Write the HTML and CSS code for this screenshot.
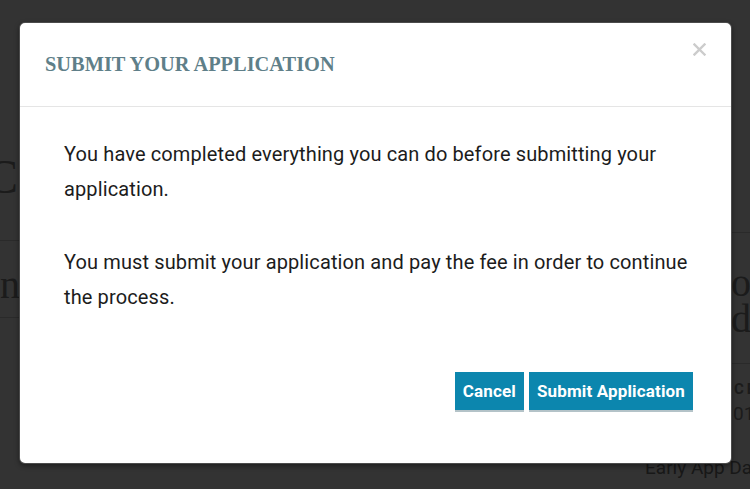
FILE: index.html
```html
<!DOCTYPE html>
<html lang="en">
<head>
<meta charset="utf-8">
<title>Submit Your Application</title>
<link rel="stylesheet" href="styles.css">
</head>
<body>
<div class="page">
  <div class="col-left">
    <h1 class="page-title">Complete Your Application</h1>
    <div class="plan-row"><span class="plan-name">n</span><span class="plan-tag">E</span></div>
  </div>
  <div class="col-right">
    <div class="deadline-big"><div>on</div><div>de</div></div>
    <div class="deadline-label">CE</div>
    <div class="deadline-date">01</div>
    <div class="deadline-note">Early App Date</div>
  </div>
</div>
<div class="backdrop"></div>
<div class="modal">
  <div class="modal-header">
    <h2 class="modal-title">SUBMIT YOUR APPLICATION</h2>
    <button class="close-btn" aria-label="Close">
      <svg width="13" height="13" viewBox="0 0 13 13"><path d="M1.5 1.5 L11.5 11.5 M11.5 1.5 L1.5 11.5" stroke="#cccccc" stroke-width="2.4" stroke-linecap="square"/></svg>
    </button>
  </div>
  <div class="modal-body">
    <p>You have completed everything you can do before submitting your application.</p>
    <p>You must submit your application and pay the fee in order to continue the process.</p>
  </div>
  <div class="modal-footer">
    <button class="btn">Cancel</button>
    <button class="btn">Submit Application</button>
  </div>
</div>
</body>
</html>
```
FILE: styles.css
```css
html, body {
  margin: 0;
  padding: 0;
}
body {
  width: 750px;
  height: 489px;
  overflow: hidden;
  background: #ffffff;
  position: relative;
  font-family: "Roboto", "Liberation Sans", sans-serif;
}
.page {
  display: flex;
  margin-left: -14px;
}
.col-left {
  width: 659px;
  flex: none;
}
.page-title {
  margin: 0;
  padding-top: 150px;
  padding-bottom: 36px;
  font-family: "Liberation Serif", serif;
  font-weight: normal;
  font-size: 48px;
  line-height: 54px;
  color: #888888;
  border-bottom: 1px solid #d2d2d2;
  white-space: nowrap;
}
.plan-row {
  padding: 24px 0 12px 14px;
  border-bottom: 1px solid #d2d2d2;
  white-space: nowrap;
  display: flex;
  align-items: flex-start;
}
.plan-name {
  font-family: "Liberation Serif", serif;
  font-size: 40px;
  line-height: 40px;
  color: #888888;
}
.plan-tag {
  font-size: 16px;
  margin-top: 6px;
  color: #2f7f94;
}
.col-right {
  flex: 1;
  padding-top: 232px;
  white-space: nowrap;
}
.deadline-big {
  border-top: 1px solid #d2d2d2;
  border-bottom: 1px solid #d2d2d2;
  padding: 32px 0 26px 86px;
  font-family: "Liberation Serif", serif;
  font-size: 40px;
  line-height: 36px;
  color: #888888;
}
.deadline-label {
  padding: 16px 0 0 89px;
  font-weight: bold;
  font-size: 15px;
  letter-spacing: 3px;
  color: #888888;
}
.deadline-date {
  padding: 4px 0 0 88px;
  font-size: 19px;
  color: #888888;
}
.deadline-note {
  padding-top: 31px;
  font-size: 19px;
  color: #777777;
}
.backdrop {
  position: absolute;
  inset: 0;
  background: rgba(0, 0, 0, 0.8);
}
.modal {
  position: absolute;
  left: 19px;
  top: 22px;
  width: 713px;
  height: 442px;
  box-sizing: border-box;
  background: #ffffff;
  border: 1px solid rgba(0, 0, 0, 0.7);
  border-radius: 6px;
  display: flex;
  flex-direction: column;
  box-shadow: 0 2px 5px rgba(0, 0, 0, 0.4);
}
.modal-header {
  display: flex;
  justify-content: space-between;
  align-items: flex-start;
  padding: 20px 25px 31px 25px;
  border-bottom: 1px solid #e5e5e5;
}
.modal-title {
  margin: 10px 0 0 0;
  font-family: "Liberation Serif", serif;
  font-weight: bold;
  font-size: 20.4px;
  line-height: 22px;
  color: #5f7f89;
}
.close-btn {
  border: none;
  background: none;
  padding: 0;
  margin: 0;
  width: 13px;
  height: 13px;
  display: block;
}
.close-btn svg {
  display: block;
}
.modal-body {
  padding: 30px 22px 0 44px;
  font-size: 20px;
  line-height: 35px;
  letter-spacing: 0.12px;
  color: #1c1c1c;
}
.modal-body p {
  margin: 0 0 38px 0;
}
.modal-body p:last-child {
  margin-bottom: 0;
}
.modal-footer {
  margin-top: auto;
  display: flex;
  justify-content: flex-end;
  gap: 5px;
  padding: 0 38px 51px 0;
}
.btn {
  height: 40px;
  box-sizing: border-box;
  padding: 0 8px;
  border: none;
  border-bottom: 2px solid #b4c3c8;
  background: #0c86ae;
  color: #ffffff;
  font-family: "Roboto", "Liberation Sans", sans-serif;
  font-weight: bold;
  font-size: 17px;
  letter-spacing: 0.15px;
  line-height: 39px;
}
```
